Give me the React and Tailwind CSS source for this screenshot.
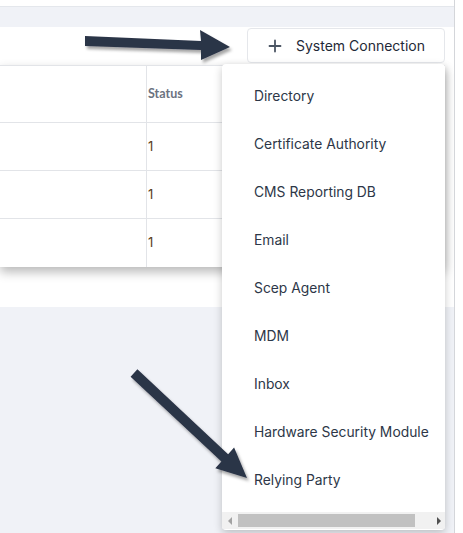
const connectionTypes = [
  'Directory',
  'Certificate Authority',
  'CMS Reporting DB',
  'Email',
  'Scep Agent',
  'MDM',
  'Inbox',
  'Hardware Security Module',
  'Relying Party',
]

const rows = [1, 1, 1]

function PlusIcon() {
  return (
    <svg width="14" height="14" viewBox="0 0 14 14" className="shrink-0">
      <path d="M7 1.5v11M1.5 7h11" stroke="#4b5563" strokeWidth="1.8" strokeLinecap="round" />
    </svg>
  )
}

function ConnectionMenu() {
  return (
    <div className="absolute left-[222px] top-[64px] w-[223px] bg-white rounded-[4px] shadow-[0_3px_8px_rgba(0,0,0,0.22)] overflow-hidden">
      <ul className="pt-[8px] pb-[8px]">
        {connectionTypes.map(name => (
          <li key={name} className="h-[48px] flex items-center pl-[32px] whitespace-nowrap text-[13.85px] text-[#2d3748]">
            {name}
          </li>
        ))}
      </ul>
      {/* horizontal scroll bar of the menu */}
      <div className="h-[17px] mb-[1px] bg-[#f1f1f1] flex items-center">
        <div className="w-[16px] flex justify-center">
          <div className="w-0 h-0 border-y-[4px] border-y-transparent border-r-[4px] border-r-[#a3a3a3]" />
        </div>
        <div className="h-[13px] w-[177px] bg-[#c1c1c1]" />
        <div className="flex-1 flex justify-end pr-[4px]">
          <div className="w-0 h-0 border-y-[4px] border-y-transparent border-l-[4px] border-l-[#505050]" />
        </div>
      </div>
    </div>
  )
}

function Pointers() {
  return (
    <svg className="absolute inset-0 pointer-events-none" width="463" height="533" viewBox="0 0 463 533">
      <defs>
        <filter id="arrowShadow" x="-20%" y="-20%" width="140%" height="160%">
          <feDropShadow dx="2" dy="3" stdDeviation="1.6" floodColor="#000" floodOpacity="0.35" />
        </filter>
      </defs>
      <g fill="#2b3447" filter="url(#arrowShadow)">
        <polygon points="85,36 201,41 200,30 230,47 201,60 201,50 85,46" />
        <polygon points="137.4,369.3 228.1,454.2 234.1,447.5 247,478 215.3,468.3 221.4,461.6 130.6,376.7" />
      </g>
    </svg>
  )
}

export default function App() {
  return (
    <div className="relative w-[463px] h-[533px] overflow-hidden flex bg-white" style={{ fontFamily: 'Inter, "Noto Sans", sans-serif' }}>
      <div className="flex-1 flex flex-col bg-[#f0f2f7]">
        <div className="h-[7px] bg-white border-b border-[#e4e7ec]" />
        <div className="mt-[20px] h-[280px] bg-white">
          <div className="flex justify-end pr-[9px] pt-[1px]">
            <button className="w-[198px] h-[35px] flex items-center gap-[14px] pl-[20px] bg-white border border-[#e5e7eb] rounded-[4px] text-[14px] text-[#1f2937]">
              <PlusIcon />
              <span>System Connection</span>
            </button>
          </div>
          <div className="mt-[2px] w-[445px] bg-white border-t border-[#e2e4e8] shadow-[0_5px_10px_rgba(0,0,0,0.28)]">
            <div className="flex h-[57px] border-b border-[#e2e4e8]">
              <div className="w-[147px] border-r border-[#e2e4e8]" />
              <div className="flex-1 pl-[1px] pt-[19px] text-[12.5px] font-bold text-[#6b7280]" style={{ fontFamily: 'Lato, sans-serif' }}>Status</div>
            </div>
            {rows.map((v, i) => (
              <div key={i} className="flex h-[48px] border-b border-[#e2e4e8] last:border-b-0">
                <div className="w-[147px] border-r border-[#e2e4e8]" />
                <div className="flex-1 pl-[1px] flex items-center text-[13px] text-[#5a4020]">{v}</div>
              </div>
            ))}
          </div>
        </div>
      </div>
      <div className="w-[9px] border-l border-[#d4d6da] bg-white" />
      <ConnectionMenu />
      <Pointers />
    </div>
  )
}
